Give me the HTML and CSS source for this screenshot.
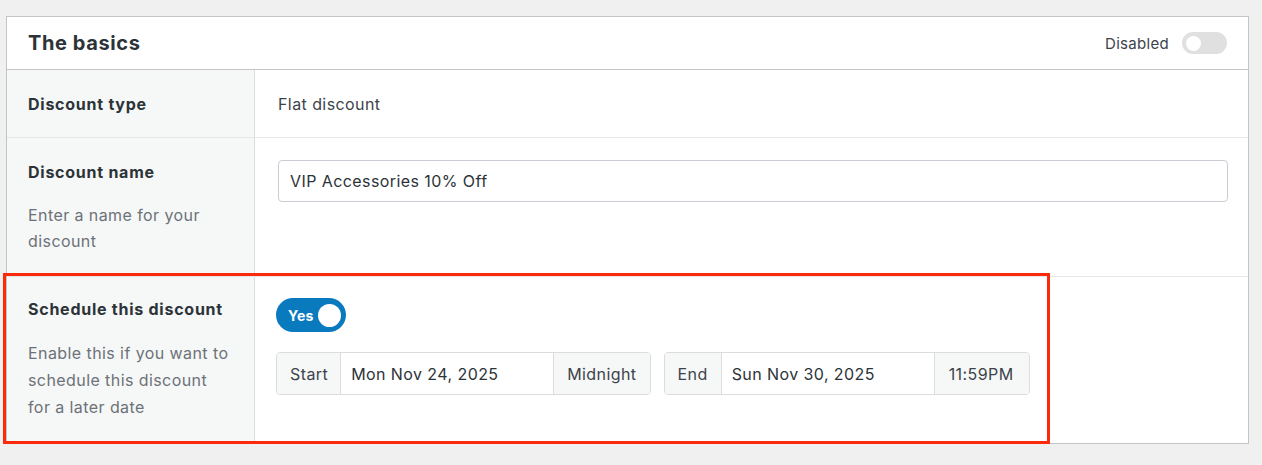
FILE: index.html
```html
<!DOCTYPE html>
<html lang="en">
<head>
<meta charset="utf-8">
<title>The basics</title>
<link rel="stylesheet" href="styles.css">
</head>
<body>
<div class="page">
  <section class="card">
    <header class="card-head">
      <h2 class="card-title">The basics</h2>
      <div class="status">
        <span class="status-text">Disabled</span>
        <span class="switch switch-off"><span class="knob"></span></span>
      </div>
    </header>

    <div class="row row-type">
      <div class="label"><div class="label-title">Discount type</div></div>
      <div class="value value-text">Flat discount</div>
    </div>

    <div class="row row-name">
      <div class="label">
        <div class="label-title">Discount name</div>
        <div class="label-desc">Enter a name for your discount</div>
      </div>
      <div class="value">
        <div class="text-input">VIP Accessories 10% Off</div>
      </div>
    </div>

    <div class="row row-schedule">
      <div class="label">
        <div class="label-title">Schedule this discount</div>
        <div class="label-desc">Enable this if you want to schedule this discount for a later date</div>
      </div>
      <div class="value">
        <span class="switch switch-on"><span class="switch-label">Yes</span><span class="knob"></span></span>
        <div class="dates">
          <div class="date-group">
            <span class="addon addon-start">Start</span>
            <span class="date-field">Mon Nov 24, 2025</span>
            <span class="addon addon-time">Midnight</span>
          </div>
          <div class="date-group">
            <span class="addon addon-end">End</span>
            <span class="date-field">Sun Nov 30, 2025</span>
            <span class="addon addon-time addon-time-end">11:59PM</span>
          </div>
        </div>
      </div>
    </div>
  </section>
  <div class="highlight"></div>
</div>
</body>
</html>
```

FILE: styles.css
```css
* { box-sizing: border-box; }

html, body {
  margin: 0;
  padding: 0;
}

body {
  background: #f0f0f1;
  font-family: "Inter", "Liberation Sans", sans-serif;
  color: #3c434a;
  width: 1262px;
  height: 465px;
  overflow: hidden;
  letter-spacing: 0.42px;
}

.page {
  position: relative;
  padding: 16px 13px 0 6px;
}

.card {
  background: #fff;
  border: 1px solid #c3c4c7;
}

.card-head {
  height: 53px;
  display: flex;
  align-items: center;
  justify-content: space-between;
  padding: 0 21px 0 21px;
  border-bottom: 1px solid #c3c4c7;
}

.card-title {
  margin: 0;
  font-size: 20px;
  font-weight: 650;
  color: #2c3338;
  letter-spacing: 0.6px;
}

.status {
  display: flex;
  align-items: center;
  gap: 13px;
}

.status-text {
  font-size: 15px;
  color: #3c434a;
  letter-spacing: 0.3px;
}

.switch {
  display: inline-flex;
  align-items: center;
  border-radius: 999px;
}

.switch-off {
  width: 45px;
  height: 22px;
  background: #e0e0e0;
  padding-left: 4px;
}

.switch-off .knob {
  width: 15px;
  height: 15px;
  border-radius: 50%;
  background: #fff;
}

.switch-on {
  width: 70px;
  height: 34px;
  background: #0a7abf;
  padding: 0 5px 0 12px;
  justify-content: space-between;
}

.switch-label {
  color: #fff;
  font-size: 14px;
  font-weight: 700;
  letter-spacing: 0.2px;
}

.switch-on .knob {
  width: 23px;
  height: 23px;
  border-radius: 50%;
  background: #fff;
}

.row {
  display: grid;
  grid-template-columns: 248px 1fr;
  border-bottom: 1px solid #e6e6e6;
}

.row:last-child {
  border-bottom: none;
}

.label {
  background: #f6f7f7;
  border-right: 1px solid #dcdcde;
  padding: 22px 24px 22px 21px;
}

.label-title {
  font-size: 16px;
  font-weight: 650;
  line-height: 24px;
  color: #2c3338;
  letter-spacing: 0.75px;
}

.label-desc {
  margin-top: 18px;
  font-size: 16px;
  line-height: 26px;
  color: #6c7278;
}

.value {
  padding: 22px 20px 22px 23px;
}

.value-text {
  font-size: 16px;
  line-height: 24px;
  color: #3c434a;
}

.row-type .label,
.row-type .value { padding-top: 22px; padding-bottom: 21px; }

.text-input {
  height: 42px;
  border: 1px solid #c9ccd4;
  border-radius: 4px;
  padding: 0 11px;
  display: flex;
  align-items: center;
  font-size: 16px;
  color: #2c3338;
  width: 950px;
}

.row-schedule .label { padding-top: 20px; padding-bottom: 22px; }
.row-schedule .label-desc { margin-top: 19px; line-height: 27px; }
.row-schedule .value { padding: 21px 20px 22px 21px; }

.dates {
  display: flex;
  gap: 13px;
  margin-top: 20px;
}

.date-group {
  display: flex;
  height: 43px;
  border: 1px solid #dcdcde;
  border-radius: 4px;
  overflow: hidden;
  font-size: 16px;
}

.addon {
  display: flex;
  align-items: center;
  background: #f6f7f7;
  color: #3c434a;
  padding: 0 12px 0 13px;
}

.addon-start, .addon-end {
  border-right: 1px solid #dcdcde;
}

.addon-end { padding: 0 13px 0 13px; }

.addon-time {
  padding: 0 13px 0 13px;
}

.addon-time-end {
  padding: 0 15px 0 14px;
}

.date-field {
  width: 213px;
  display: flex;
  align-items: center;
  padding-left: 10px;
  background: #fff;
  color: #2c3338;
  border-right: 1px solid #dcdcde;
}

.highlight {
  position: absolute;
  left: 3px;
  top: 273px;
  width: 1047px;
  height: 171px;
  border: 3px solid #fc2a0c;
  pointer-events: none;
}
```
